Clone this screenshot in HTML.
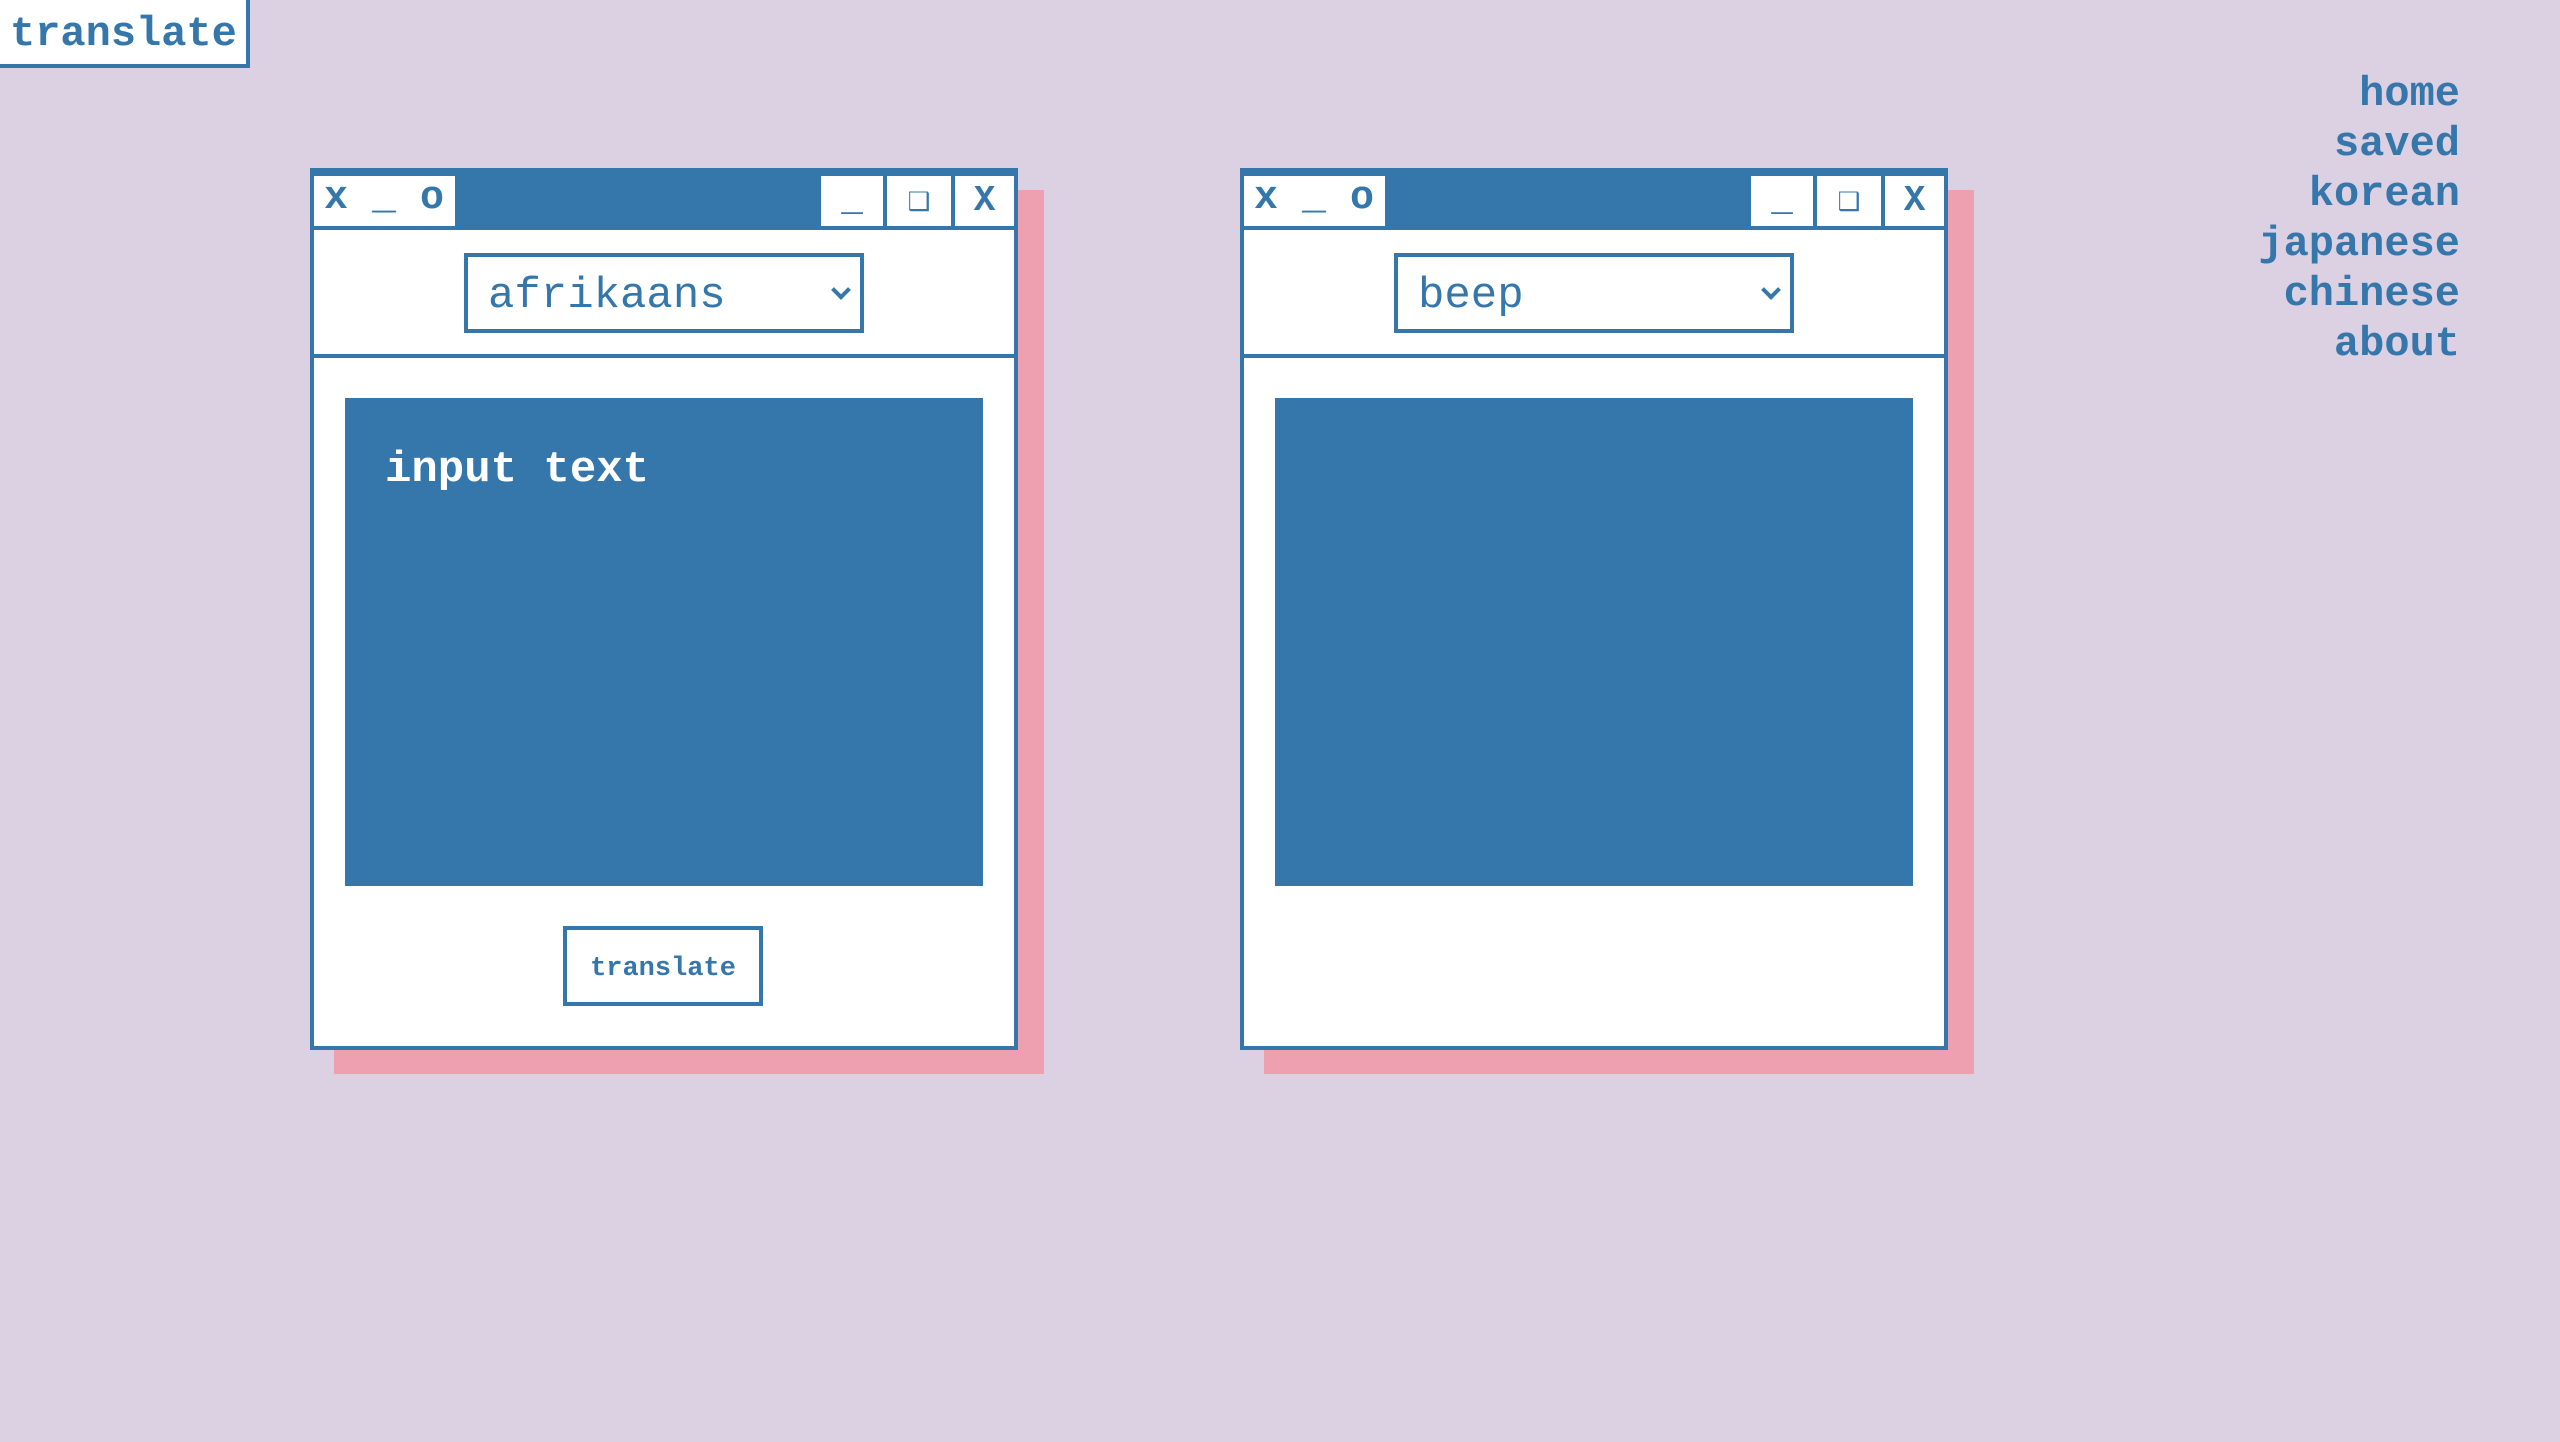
<!DOCTYPE html>
<html><head><style>
*{margin:0;padding:0;box-sizing:border-box}
body{width:2560px;height:1442px;background:#dcd0e3;position:relative;overflow:hidden;font-family:"Liberation Mono",monospace;color:#3577ab}
.a{position:absolute}
.logo{left:0;top:0;width:250px;height:68px;background:#fff;border:4px solid #3577ab;border-left:none;border-top:none;font-weight:bold;font-size:42px;line-height:68px;padding-left:10px}
.nav{right:100px;top:69px;text-align:right;font-weight:bold;font-size:42px;line-height:50px}
.sh{background:#efa0b0;width:710px;height:884px}
.win{width:708px;height:882px;background:#fff;border:4px solid #3577ab}
.tb{position:absolute;left:0;top:0;right:0;height:58px;background:#3577ab}
.tl{position:absolute;left:0;top:4px;width:141px;height:50px;background:#fff;font-size:40px;font-weight:bold;line-height:46px;padding-left:10px;white-space:pre}
.bt{position:absolute;top:4px;height:50px;background:#fff;text-align:center;font-size:36px;font-weight:bold;line-height:50px}
.dd{position:absolute;left:150px;top:81px;width:400px;height:80px;border:4px solid #3577ab;font-size:44px;line-height:78px;padding-left:20px;font-family:"Liberation Sans Narrow","Liberation Mono",monospace}
.dd:after{content:"";position:absolute;right:12px;top:26px;width:10px;height:10px;border-right:4px solid #3577ab;border-bottom:4px solid #3577ab;transform:rotate(45deg)}
.sep{position:absolute;left:0;right:0;top:182px;height:4px;background:#3577ab}
.ta{position:absolute;left:31px;top:226px;width:638px;height:488px;background:#3577ab;color:#fff;font-weight:bold;font-size:44px;padding:47px 40px}
.btn{position:absolute;left:249px;top:754px;width:200px;height:80px;border:4px solid #3577ab;font-weight:bold;font-size:27px;text-align:center;line-height:78px}
</style></head><body>
<div class="a logo">translate</div>
<div class="a nav">home<br>saved<br>korean<br>japanese<br>chinese<br>about</div>

<div class="a sh" style="left:334px;top:190px"></div>
<div class="a win" style="left:310px;top:168px">
<div class="tb"><div class="tl">x _ o</div>
<div class="bt" style="left:507px;width:62px">_</div>
<div class="bt" style="left:573px;width:64px">❑</div>
<div class="bt" style="left:641px;width:59px">X</div></div>
<div class="dd">afrikaans</div>
<div class="sep"></div>
<div class="ta">input text</div>
<div class="btn">translate</div>
</div>

<div class="a sh" style="left:1264px;top:190px"></div>
<div class="a win" style="left:1240px;top:168px">
<div class="tb"><div class="tl">x _ o</div>
<div class="bt" style="left:507px;width:62px">_</div>
<div class="bt" style="left:573px;width:64px">❑</div>
<div class="bt" style="left:641px;width:59px">X</div></div>
<div class="dd">beep</div>
<div class="sep"></div>
<div class="ta"></div>
</div>
</body></html>
